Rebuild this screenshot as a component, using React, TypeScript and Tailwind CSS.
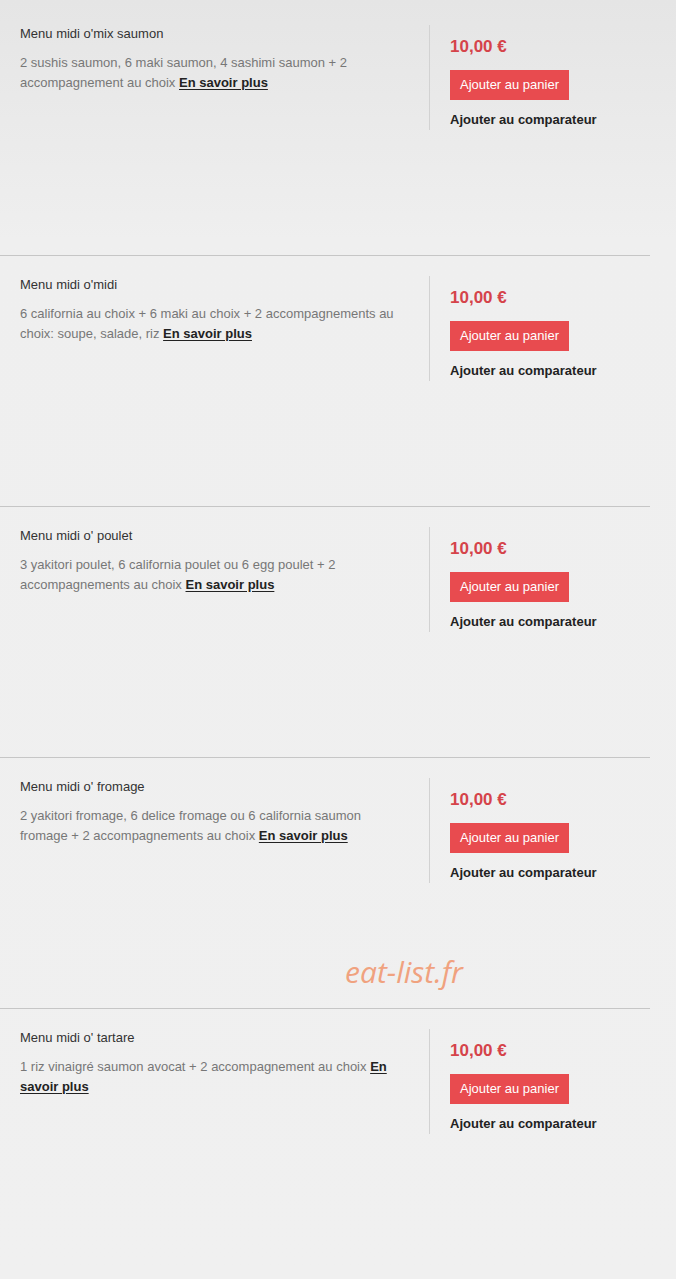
import React from "react";

const menus: { title: string; desc: string }[] = [
  {
    title: "Menu midi o'mix saumon",
    desc: "2 sushis saumon, 6 maki saumon, 4 sashimi saumon + 2 accompagnement au choix",
  },
  {
    title: "Menu midi o'midi",
    desc: "6 california au choix + 6 maki au choix + 2 accompagnements au choix: soupe, salade, riz",
  },
  {
    title: "Menu midi o' poulet",
    desc: "3 yakitori poulet, 6 california poulet ou 6 egg poulet + 2 accompagnements au choix",
  },
  {
    title: "Menu midi o' fromage",
    desc: "2 yakitori fromage, 6 delice fromage ou 6 california saumon fromage + 2 accompagnements au choix",
  },
  {
    title: "Menu midi o' tartare",
    desc: "1 riz vinaigré saumon avocat + 2 accompagnement au choix",
  },
];

function MenuRow({ title, desc, first }: { title: string; desc: string; first: boolean }) {
  return (
    <div
      className={`h-[251px] w-[650px] border-t ${first ? "border-transparent" : "border-[#c6c6c6]"}`}
    >
      <div className="flex pt-[20px]">
        <div className="w-[429px] shrink-0 pl-5 pr-5">
          <div className="text-[13px] leading-[18px] text-[#333]">{title}</div>
          <p className="mt-[10px] text-[13px] leading-[20px] text-[#777]">
            {desc}{" "}
            <a className="font-bold text-[#222] underline underline-offset-2">En savoir plus</a>
          </p>
        </div>
        <div className="h-[105px] border-l border-[#d2d2d2] pl-5">
          <div className="pt-[11px] text-[17px] font-bold leading-[22px] text-[#d5434a]">10,00 €</div>
          <button className="mt-[12px] h-[30px] bg-[#e84b4f] px-[10px] text-[13px] text-white">
            Ajouter au panier
          </button>
          <div className="mt-[10px] text-[13px] font-bold leading-[20px] text-[#222]">
            Ajouter au comparateur
          </div>
        </div>
      </div>
    </div>
  );
}

export default function App() {
  return (
    <div
      className="relative min-h-[1279px] w-[676px] bg-[linear-gradient(to_bottom,#e5e5e5_0px,#efefef_240px,#f0f0f0_100%)] pt-[4px]"
      style={{ fontFamily: '"Liberation Sans", Arial, sans-serif' }}
    >
      {menus.map((m, i) => (
        <MenuRow key={m.title} title={m.title} desc={m.desc} first={i === 0} />
      ))}
      <div
        className="pointer-events-none absolute left-[345px] top-[952px] text-[30px] italic leading-[40px] text-[#f0a27f]"
        style={{ fontFamily: '"Open Sans", sans-serif' }}
      >
        eat-list.fr
      </div>
    </div>
  );
}
